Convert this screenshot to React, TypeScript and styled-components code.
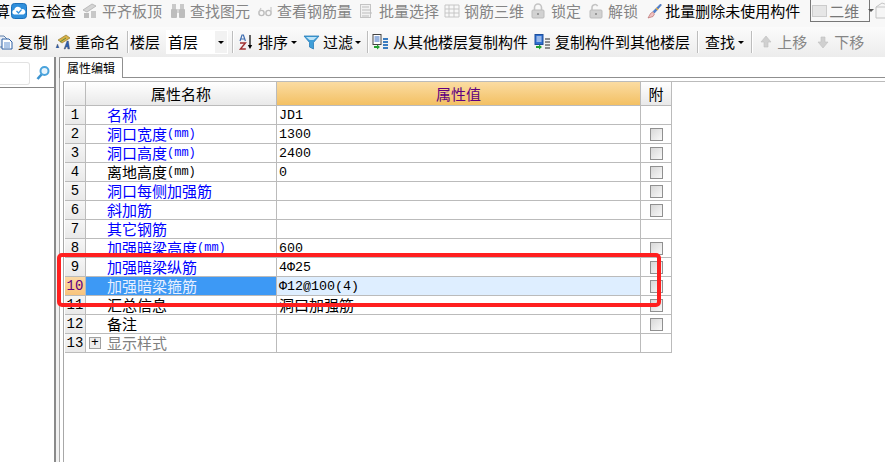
import { ReactNode } from 'react';
import styled, { createGlobalStyle } from 'styled-components';

const GlobalStyle = createGlobalStyle`
  html, body {
    margin: 0;
    padding: 0;
    background: #fff;
    overflow: hidden;
  }
  * {
    box-sizing: border-box;
  }
`;

const CJK = '"Noto Sans CJK SC", "Liberation Sans", sans-serif';
const MONO = '"Liberation Mono", "Noto Sans CJK SC", monospace';

type Row = {
  name: string;
  unit?: boolean;
  value?: string;
  cjkValue?: string;
  tone: 'blue' | 'black' | 'grey';
  check: boolean;
};

const rows: Row[] = [
  { name: '名称', value: 'JD1', tone: 'blue', check: false },
  { name: '洞口宽度', unit: true, value: '1300', tone: 'blue', check: true },
  { name: '洞口高度', unit: true, value: '2400', tone: 'blue', check: true },
  { name: '离地高度', unit: true, value: '0', tone: 'black', check: true },
  { name: '洞口每侧加强筋', tone: 'blue', check: true },
  { name: '斜加筋', tone: 'blue', check: true },
  { name: '其它钢筋', tone: 'blue', check: false },
  { name: '加强暗梁高度', unit: true, value: '600', tone: 'blue', check: true },
  { name: '加强暗梁纵筋', value: '4Φ25', tone: 'blue', check: true },
  { name: '加强暗梁箍筋', value: 'Φ12@100(4)', tone: 'blue', check: true },
  { name: '汇总信息', cjkValue: '洞口加强筋', tone: 'black', check: true },
  { name: '备注', tone: 'black', check: true },
  { name: '显示样式', tone: 'grey', check: false },
];

const Icon = ({ children, w = 16 }: { children: ReactNode; w?: number }) => (
  <svg width={w} height={16} viewBox={`0 0 ${w} 16`} style={{ flex: 'none' }}>
    {children}
  </svg>
);

const CloudCheckIcon = () => (
  <Icon>
    <rect x="0.5" y="0.5" width="15" height="15" rx="3" fill="#2f8fdc" stroke="#1c6fb8" />
    <path d="M3 11.5a2.4 2.4 0 0 1 .4-4.7 3.6 3.6 0 0 1 7-.6 2.7 2.7 0 0 1 2 5.3z" fill="#fff" />
    <path d="M5.5 8l2 2 3-3.4" fill="none" stroke="#2f8fdc" strokeWidth="1.3" />
  </Icon>
);

const AlignIcon = () => (
  <Icon>
    <path d="M1 7l9-6 4 2-9 6z" fill="#d4d4d4" stroke="#bbb" />
    <rect x="2" y="10" width="5" height="5" fill="#bdbdbd" />
    <rect x="9" y="8" width="5" height="7" fill="#c8c8c8" />
  </Icon>
);

const BinocularsIcon = () => (
  <Icon>
    <rect x="2" y="1" width="4" height="5" fill="#c9c9c9" />
    <rect x="10" y="1" width="4" height="5" fill="#c9c9c9" />
    <rect x="1" y="6" width="6" height="9" rx="1" fill="#bdbdbd" />
    <rect x="9" y="6" width="6" height="9" rx="1" fill="#bdbdbd" />
    <rect x="7" y="6" width="2" height="4" fill="#d6d6d6" />
  </Icon>
);

const GlassesIcon = () => (
  <Icon>
    <circle cx="4.5" cy="10" r="2.6" fill="none" stroke="#bdbdbd" strokeWidth="1.4" />
    <circle cx="11.5" cy="10" r="2.6" fill="none" stroke="#bdbdbd" strokeWidth="1.4" />
    <path d="M2 9l2-4M14 9V4" stroke="#c8c8c8" strokeWidth="1.2" fill="none" />
  </Icon>
);

const SelectIcon = () => (
  <Icon>
    <rect x="1.5" y="1.5" width="10" height="13" fill="#f2f2f2" stroke="#c4c4c4" />
    <path d="M3 4h7M3 7h9M3 10h10M3 13h7" stroke="#bdbdbd" />
  </Icon>
);

const RebarIcon = () => (
  <Icon>
    <path d="M1 2h14v12H1zM1 6h14M1 10h14M5 2v12M10 2v12" fill="none" stroke="#c6c6c6" />
  </Icon>
);

const LockIcon = ({ open }: { open?: boolean }) => (
  <Icon>
    <path
      d={open ? 'M4 7V4.5a3 3 0 0 1 5.6-1.4' : 'M4.5 7V4.5a3.5 3.5 0 0 1 7 0V7'}
      fill="none"
      stroke="#c4c4c4"
      strokeWidth="1.6"
    />
    <rect x="2" y="7" width="12" height="8" rx="1" fill="#d2d2d2" stroke="#bcbcbc" />
    <rect x="7" y="10" width="2" height="2" fill="#999" />
  </Icon>
);

const BrushIcon = () => (
  <Icon>
    <path d="M14.5 1L7 8.5l1.5 1.5L15.5 2z" fill="#4d7fd0" stroke="#2f5ca8" strokeWidth="0.5" />
    <path d="M6.5 9l-2 1.5L2 15l5-1.5L8.5 11z" fill="#f0c2c2" stroke="#b06060" strokeWidth="0.6" />
    <path d="M10 5l2 2" stroke="#e8b040" strokeWidth="1.2" />
  </Icon>
);

const CopyIcon = () => (
  <Icon>
    <path d="M-2 2h8l3 3v8H-2z" fill="#e7edf6" stroke="#5f7fa8" />
    <path d="M4 5h7l3 3v7H4z" fill="#fff" stroke="#2c5ea3" />
    <path d="M6 9h6M6 11h6M6 13h6" stroke="#5f8fd0" />
  </Icon>
);

const RenameIcon = () => (
  <Icon>
    <path d="M3 6l8-5 4 3-8 5z" fill="#d8b048" stroke="#857020" strokeWidth="0.6" />
    <path d="M5 8l6-4" stroke="#5c8c3c" />
    <path d="M1 14l1.5-4 1.5 4M9 15l3-8h1.4l1.2 8h-1.8l-.2-2h-1.6l-.7 2z" fill="#2a5db0" stroke="#555" strokeWidth="0.4" />
  </Icon>
);

const SortIcon = () => (
  <Icon>
    <path d="M2 7l2-6h1.4l2 6M3 5h3.4" fill="none" stroke="#3d6cb0" strokeWidth="1.2" />
    <path d="M2 9h5.4L2.4 15h5.4" fill="none" stroke="#a03030" strokeWidth="1.4" />
    <path d="M12 1v12" stroke="#000" strokeWidth="1.2" />
    <path d="M9.8 11l2.2 4 2.2-4z" fill="#000" />
  </Icon>
);

const FunnelIcon = () => (
  <Icon w={17}>
    <path d="M1 2h15l-5.5 6.5V15l-4-2V8.500z" fill="#3f9ed8" stroke="#2a7cb8" strokeWidth="0.8" />
    <path d="M3 3h11l-3.500 3H6.500z" fill="#bfe4f7" />
  </Icon>
);

const CopyLevelIcon = () => (
  <Icon w={17}>
    <rect x="1" y="0.5" width="8" height="10" fill="#fff" stroke="#444" />
    <path d="M2.500 3h5M2.500 5h5M2.500 7h5" stroke="#3068c0" />
    <path d="M2 12h3v-1.500l3 2.500-3 2.500V14H2z" fill="#22a030" />
    <path d="M11 4h5v2h-5zM11 7h5v2h-5zM11 10h5v2h-5zM11 13h5v2h-5z" fill="#3a7cc0" />
  </Icon>
);

const CopyOtherIcon = () => (
  <Icon w={17}>
    <rect x="1" y="0.5" width="8" height="10" fill="#2f6fd0" stroke="#1d4f9c" />
    <path d="M2.500 3h5M2.500 5h5M2.500 7h5" stroke="#fff" />
    <path d="M2 12h3v-1.500l3 2.500-3 2.500V14H2z" fill="#22a030" />
    <path d="M11 4h5v2h-5zM11 7h5v2h-5zM11 10h5v2h-5zM11 13h5v2h-5z" fill="#8d8d8d" />
  </Icon>
);

const ArrowIcon = ({ down }: { down?: boolean }) => (
  <Icon w={12}>
    <path
      d={down ? 'M4 3h4v5h3l-5 6-5-6h3z' : 'M4 13h4V8h3L6 2 1 8h3z'}
      fill="#d0d0d0"
      stroke="#c0c0c0"
      strokeWidth="0.6"
    />
  </Icon>
);

const SearchIcon = () => (
  <Icon>
    <circle cx="9.500" cy="6" r="4" fill="#e8f4fc" stroke="#4aa3dc" strokeWidth="2" />
    <path d="M6.500 9.500L2.500 14" stroke="#3b93d0" strokeWidth="2.600" />
  </Icon>
);

const CubeIcon = () => (
  <svg width="16" height="22" viewBox="0 0 16 22" style={{ flex: 'none' }}>
    <path d="M1 7l6-4 8 3v12H1zM1 7h14" fill="#f6f6f6" stroke="#c4c4c4" />
  </svg>
);

const Page = styled.div`
  width: 885px;
  height: 462px;
  display: flex;
  flex-direction: column;
  overflow: hidden;
  background: #fff;
  font-family: ${CJK};
  font-size: 15px;
`;

const TopBar = styled.div`
  height: 27px;
  flex: none;
  display: flex;
  align-items: center;
  gap: 7px;
  padding-bottom: 6px;
  background: #f8f8f8;
  white-space: nowrap;
`;

const ActionBar = styled.div`
  height: 30px;
  flex: none;
  display: flex;
  align-items: center;
  gap: 7px;
  background: linear-gradient(#fbfbfb, #ececec);
  white-space: nowrap;
`;

const Tool = styled.div<{ $off?: boolean; $gap?: number; $ml?: number }>`
  display: flex;
  flex: none;
  align-items: center;
  gap: ${({ $gap }) => $gap ?? 4}px;
  margin-left: ${({ $ml }) => $ml ?? 0}px;
  line-height: 20px;
  color: ${({ $off }) => ($off ? '#858585' : '#000')};
`;

const ClippedChar = styled.span`
  margin-left: -5px;
  margin-right: -1px;
  width: 10px;
  flex: none;
  line-height: 20px;
`;

const Divider = styled.div<{ $ml?: number }>`
  width: 1px;
  height: 22px;
  flex: none;
  margin-left: ${({ $ml }) => $ml ?? 0}px;
  background: #bdbdbd;
  box-shadow: 1px 0 0 #fff;
`;

const Caret = styled.span`
  width: 0;
  height: 0;
  flex: none;
  margin-left: -1px;
  border-left: 3px solid transparent;
  border-right: 3px solid transparent;
  border-top: 3px solid #000;
`;

const ViewSelect = styled.div`
  width: 60px;
  height: 22px;
  flex: none;
  align-self: flex-start;
  margin-left: 3px;
  margin-right: -2px;
  display: flex;
  align-items: center;
  gap: 2px;
  padding-left: 1px;
  border: 1px solid #777;
  border-top: none;
  color: #777;
  line-height: 20px;
`;

const ViewSwatch = styled.span`
  width: 15px;
  height: 12px;
  flex: none;
  background: #e6e6e6;
  border: 1px solid #ccc;
`;

const ViewCaret = styled(Caret)`
  margin-left: 7px;
  border-top-color: #555;
`;

const FloorSelect = styled.div`
  width: 62px;
  height: 24px;
  flex: none;
  margin-left: -1px;
  display: flex;
  align-items: center;
  justify-content: space-between;
  padding-left: 2px;
  background: #fff;
  line-height: 20px;
`;

const FloorArrow = styled.span`
  width: 12px;
  height: 22px;
  display: flex;
  align-items: center;
  justify-content: center;
  background: #f2f2f2;
  margin-right: 1px;
`;

const Body = styled.div`
  flex: 1;
  display: flex;
  min-height: 0;
`;

const LeftPanel = styled.div`
  width: 54px;
  flex: none;
`;

const SearchRow = styled.div`
  height: 31px;
  display: flex;
  align-items: center;
  gap: 5px;
  padding-top: 2px;
  border-bottom: 1px solid #888;
`;

const SearchInput = styled.div`
  width: 30px;
  height: 23px;
  background: #fff;
  border: 1px solid #e2e2e2;
  border-left: none;
  border-radius: 0 3px 3px 0;
`;

const Splitter = styled.div`
  width: 5px;
  flex: none;
  background: #f1f1f1;
  border-left: 2px solid #8a8a8a;
`;

const Main = styled.div`
  flex: 1;
  display: flex;
  flex-direction: column;
  min-width: 0;
  border-left: 1px solid #a8a8a8;
`;

const TabStrip = styled.div`
  height: 21px;
  flex: none;
  display: flex;
  margin-left: -1px;
  border-bottom: 1px solid #8f8f8f;
`;

const Tab = styled.div`
  width: 64px;
  height: 21px;
  padding-left: 7px;
  background: #fff;
  border: 1px solid #8f8f8f;
  border-bottom: none;
  border-radius: 2px 2px 0 0;
  font-size: 12px;
  line-height: 19px;
`;

const SheetFrame = styled.div`
  flex: 1;
  margin-top: 3px;
  margin-left: 3px;
  padding-left: 1px;
  background: #fff;
  border-left: 1px solid #a8a8a8;
  border-top: 1px solid #bbb;
`;

const Sheet = styled.div`
  position: relative;
  width: 607px;
  display: grid;
  grid-template-columns: 21px 191px 364px 31px;
  grid-template-rows: 24px;
  grid-auto-rows: 19px;
`;

const HeadCell = styled.div<{ $active?: boolean }>`
  display: flex;
  align-items: center;
  justify-content: center;
  border-right: 1px solid #bbb;
  border-bottom: 1px solid #bbb;
  background: ${({ $active }) =>
    $active ? 'linear-gradient(#fbdca2, #f3c063)' : 'linear-gradient(#fff, #e9e9e9)'};
  color: ${({ $active }) => ($active ? '#600080' : '#000')};
  line-height: 20px;
`;

const IndexCell = styled.div<{ $active?: boolean }>`
  display: flex;
  align-items: center;
  justify-content: center;
  border-right: 1px solid #bbb;
  border-bottom: 1px solid #bbb;
  background: ${({ $active }) =>
    $active ? 'linear-gradient(#fcd9a4, #f9c47d)' : 'linear-gradient(#f6f6f6, #e9e9e9)'};
  color: ${({ $active }) => ($active ? '#600080' : '#000')};
  font-family: ${MONO};
  font-size: 14px;
`;

const toneColor = { blue: '#0000ff', black: '#000', grey: '#808080' };

const NameCell = styled.div<{ $tone: Row['tone']; $active?: boolean }>`
  position: relative;
  display: flex;
  align-items: center;
  padding-left: 21px;
  border-right: 1px solid #bbb;
  border-bottom: 1px solid #bbb;
  background: ${({ $active }) => ($active ? '#3d99f5' : '#fff')};
  color: ${({ $tone, $active }) => ($active ? '#e8f0ff' : toneColor[$tone])};
  line-height: 18px;
`;

const Unit = styled.span`
  font-family: ${MONO};
  font-size: 12px;
`;

const ValueCell = styled.div<{ $active?: boolean }>`
  display: flex;
  align-items: center;
  padding-left: 2px;
  border-right: 1px solid #bbb;
  border-bottom: 1px solid #bbb;
  background: ${({ $active }) => ($active ? '#deeeff' : '#fff')};
  line-height: 18px;
`;

const MonoValue = styled.span`
  padding-top: 2px;
  font-family: ${MONO};
  font-size: 13.33px;
`;

const AttachCell = styled.div`
  display: flex;
  align-items: center;
  justify-content: center;
  border-right: 1px solid #bbb;
  border-bottom: 1px solid #bbb;
`;

const CheckBox = styled.span`
  width: 13px;
  height: 13px;
  border: 1px solid #909090;
  background: linear-gradient(135deg, #d8d8d8, #f8f8f8);
`;

const ExpandBox = styled.span`
  position: absolute;
  left: 3px;
  top: 3px;
  width: 12px;
  height: 12px;
  display: flex;
  align-items: center;
  justify-content: center;
  border: 1px solid #a0a0a0;
  background: #eee;
  color: #000;
  font-family: ${MONO};
  font-size: 13px;
  line-height: 10px;
`;

const Highlight = styled.div`
  position: absolute;
  left: -8px;
  top: 171px;
  width: 604px;
  height: 54px;
  border: 4px solid #ff1f1f;
  border-radius: 5px;
  pointer-events: none;
`;

export default function App() {
  return (
    <Page>
      <GlobalStyle />
      <TopBar>
        <ClippedChar>算</ClippedChar>
        <Tool>
          <CloudCheckIcon />
          云检查
        </Tool>
        <Tool $off $ml={-1}>
          <AlignIcon />
          平齐板顶
        </Tool>
        <Tool $off $ml={1}>
          <BinocularsIcon />
          查找图元
        </Tool>
        <Tool $off>
          <GlassesIcon />
          查看钢筋量
        </Tool>
        <Tool $off>
          <SelectIcon />
          批量选择
        </Tool>
        <Tool $off $ml={-2}>
          <RebarIcon />
          钢筋三维
        </Tool>
        <Tool $off $gap={5} $ml={-1}>
          <LockIcon />
          锁定
        </Tool>
        <Tool $off>
          <LockIcon open />
          解锁
        </Tool>
        <Tool $gap={3} $ml={1}>
          <BrushIcon />
          批量删除未使用构件
        </Tool>
        <ViewSelect>
          <ViewSwatch />
          二维
          <ViewCaret />
        </ViewSelect>
        <CubeIcon />
      </TopBar>
      <ActionBar>
        <Tool $ml={-2}>
          <CopyIcon />
          复制
        </Tool>
        <Tool>
          <RenameIcon />
          重命名
        </Tool>
        <Divider />
        <Tool $ml={-5}>楼层</Tool>
        <FloorSelect>
          首层
          <FloorArrow>
            <Caret />
          </FloorArrow>
        </FloorSelect>
        <Divider $ml={-3} />
        <Tool $ml={-2}>
          <SortIcon />
          排序
          <Caret />
        </Tool>
        <Tool $ml={-1} $gap={3}>
          <FunnelIcon />
          过滤
          <Caret />
        </Tool>
        <Divider $ml={-1} />
        <Tool $ml={-3}>
          <CopyLevelIcon />
          从其他楼层复制构件
        </Tool>
        <Tool $ml={-1}>
          <CopyOtherIcon />
          复制构件到其他楼层
        </Tool>
        <Divider />
        <Tool>
          查找
          <Caret />
        </Tool>
        <Divider />
        <Tool $off $gap={5} $ml={1}>
          <ArrowIcon />
          上移
        </Tool>
        <Tool $off $gap={5} $ml={3}>
          <ArrowIcon down />
          下移
        </Tool>
      </ActionBar>
      <Body>
        <LeftPanel>
          <SearchRow>
            <SearchInput />
            <SearchIcon />
          </SearchRow>
        </LeftPanel>
        <Splitter />
        <Main>
          <TabStrip>
            <Tab>属性编辑</Tab>
          </TabStrip>
          <SheetFrame>
            <Sheet>
              <HeadCell />
              <HeadCell>属性名称</HeadCell>
              <HeadCell $active>属性值</HeadCell>
              <HeadCell>附</HeadCell>
              {rows.map((row, i) => {
                const active = i === 9;
                return [
                  <IndexCell key={`i${i}`} $active={active}>
                    {i + 1}
                  </IndexCell>,
                  <NameCell key={`n${i}`} $tone={row.tone} $active={active}>
                    {row.tone === 'grey' && <ExpandBox>+</ExpandBox>}
                    {row.name}
                    {row.unit && <Unit>(mm)</Unit>}
                  </NameCell>,
                  <ValueCell key={`v${i}`} $active={active}>
                    {row.value && <MonoValue>{row.value}</MonoValue>}
                    {row.cjkValue}
                  </ValueCell>,
                  <AttachCell key={`a${i}`}>{row.check && <CheckBox />}</AttachCell>,
                ];
              })}
              <Highlight />
            </Sheet>
          </SheetFrame>
        </Main>
      </Body>
    </Page>
  );
}
